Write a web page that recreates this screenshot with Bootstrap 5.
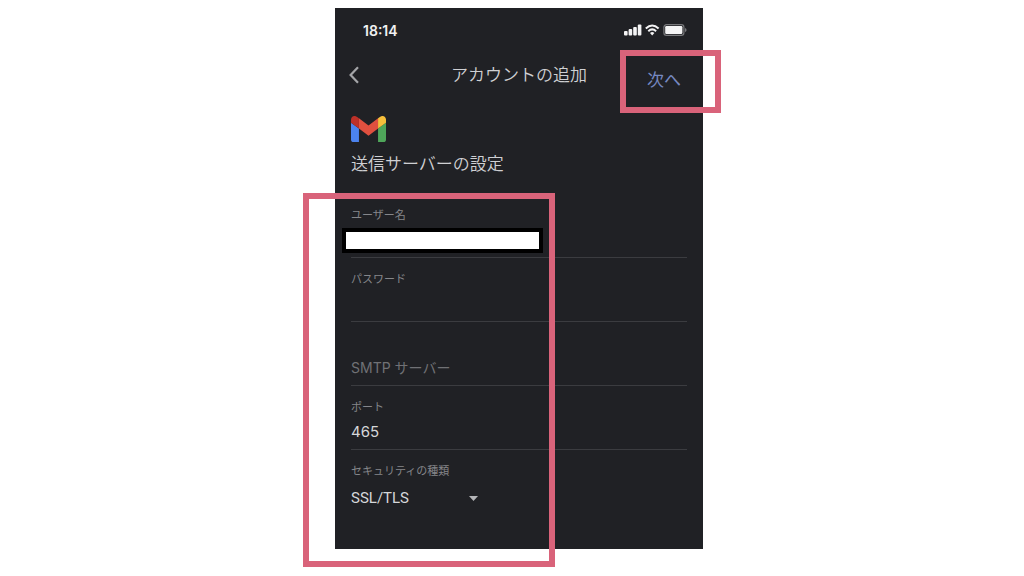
<!DOCTYPE html>
<html lang="ja">
<head>
<meta charset="utf-8">
<meta name="viewport" content="width=device-width, initial-scale=1">
<title>アカウントの追加</title>
<link href="https://cdn.jsdelivr.net/npm/bootstrap@5.3.0/dist/css/bootstrap.min.css" rel="stylesheet">
<style>
  body { font-family: Inter, "Noto Sans CJK JP", sans-serif; background: #fff; }
  .stage { padding: 8px 0 27px 14px; }
  .phone { width: 368px; max-width: 100%; background: #202125; color: #cfd0d3; padding: 0 16px 32px; }
  .status { height: 44px; padding: 0 0 0 12px; color: #f1f1f2; font-size: 14px; font-weight: 600; }
  .topbar { height: 46px; }
  .topbar h1, .section-title { font-size: 17px; line-height: 24px; font-weight: 350; }
  .side { width: 40px; }
  .plain { background: none; border: 0; padding: 0; }
  .back { margin-left: -2px; }
  .next { color: #7688c0; font-size: 17px; line-height: 24px; margin: 10px 6px 0 0; }
  .intro { padding-top: 18px; height: 96px; }
  .section-title { margin-top: 10px; }
  .field { height: 64px; border-bottom: 1px solid #3b3c40; padding-top: 13px; }
  .field label { font-size: 11px; line-height: 16px; color: #85868a; }
  .field input, .field select {
    width: 100%; height: 24px; margin-top: 5px; padding: 0; border: 0; border-radius: 0;
    background: none; color: #d6d7d9; font-size: 15px; line-height: 24px; outline: 0; appearance: none;
  }
  .field input::placeholder { color: #707175; opacity: 1; }
  .field .redacted { width: 201px; height: 25px; margin-left: -9px; background: #fff; border: 4px solid #000; }
  .field .late { margin-top: 21px; font-size: 14px; }
  .field-last { height: 67px; border-bottom: 0; }
  .field-last select { margin-top: 7px; font-family: Roboto, "Noto Sans CJK JP", sans-serif; }
  .picker { width: 128px; }
  .picker svg { right: 1px; top: 10px; pointer-events: none; }
  .callout { border: 6px solid #d9637a; pointer-events: none; }
  .callout-next { left: -27px; right: -40px; top: -18px; bottom: -21px; }
  .callout-form { left: -48px; width: 252px; top: -1px; bottom: -50px; }
</style>
</head>
<body>
<div class="stage d-flex justify-content-center">
  <main class="phone">
    <div class="status d-flex align-items-center justify-content-between">
      <span>18:14</span>
      <svg width="63" height="12" viewBox="0 0 63 12" fill="#f4f4f5" aria-hidden="true">
        <rect x="0" y="7" width="3.6" height="4.5" rx="1"/><rect x="4.6" y="5" width="3.6" height="6.5" rx="1"/><rect x="9.2" y="3" width="3.6" height="8.5" rx="1"/><rect x="13.8" y="0.5" width="3.6" height="11" rx="1"/>
        <g fill="none" stroke="#f4f4f5" stroke-width="2"><path d="M21.8 4.4Q28.2-1.4 34.6 4.4"/><path d="M24.3 7.2Q28.2 3.6 32.1 7.2"/></g>
        <path d="M26 9Q28.2 7.2 30.4 9L28.2 11.4Z"/>
        <rect x="39.9" y=".7" width="20" height="10.6" rx="2.6" fill="none" stroke="#77787b" stroke-width="1.2"/>
        <rect x="41.2" y="2" width="17.2" height="8" rx="1.2"/>
        <path d="M61 4Q62.6 4.4 62.6 6T61 8Z" fill="#77787b"/>
      </svg>
    </div>

    <header class="topbar d-flex align-items-center justify-content-between">
      <div class="side d-flex">
        <button type="button" class="plain back d-flex" aria-label="戻る">
          <svg width="10" height="18" viewBox="0 0 10 18" fill="none" stroke="#a4a5a8" stroke-width="2.2"><path d="M9 1.2 1.6 9 9 16.8"/></svg>
        </button>
      </div>
      <h1 class="mb-0">アカウントの追加</h1>
      <div class="side d-flex justify-content-end">
        <div class="position-relative next">
          <button type="button" class="plain text-nowrap text-reset d-block">次へ</button>
          <div class="callout callout-next position-absolute"></div>
        </div>
      </div>
    </header>

    <section class="intro">
      <svg class="d-block" width="35" height="26" viewBox="52 42 88 66" preserveAspectRatio="none" role="img" aria-label="Gmail">
        <path fill="#4c83ee" d="M58 108h14V74L52 59v43c0 3.32 2.69 6 6 6"/>
        <path fill="#4fa65a" d="M120 108h14c3.32 0 6-2.69 6-6V59l-20 15"/>
        <path fill="#f6bf3b" d="M120 48v26l20-15v-8c0-7.42-8.47-11.65-14.4-7.2"/>
        <path fill="#e0503f" d="M72 74V48l24 18 24-18v26L96 92"/>
        <path fill="#bd3028" d="M52 51v8l20 15V48l-5.6-4.2C60.46 39.35 52 43.58 52 51"/>
      </svg>
      <h2 class="section-title mb-0">送信サーバーの設定</h2>
    </section>

    <form class="position-relative">
      <div class="field">
        <label class="d-block" for="user">ユーザー名</label>
        <input class="redacted d-block position-relative" id="user" type="text">
      </div>
      <div class="field">
        <label class="d-block" for="pass">パスワード</label>
        <input class="d-block" id="pass" type="password">
      </div>
      <div class="field">
        <input class="late d-block" id="smtp" type="text" placeholder="SMTP サーバー" aria-label="SMTP サーバー">
      </div>
      <div class="field">
        <label class="d-block" for="port">ポート</label>
        <input class="d-block" id="port" type="text" inputmode="numeric" value="465">
      </div>
      <div class="field field-last">
        <label class="d-block" for="security">セキュリティの種類</label>
        <div class="picker position-relative">
          <select class="d-block" id="security"><option>SSL/TLS</option><option>なし</option></select>
          <svg class="position-absolute" width="9" height="5" viewBox="0 0 9 5" fill="#b4b5b8" aria-hidden="true"><path d="M0 0h9L4.5 5Z"/></svg>
        </div>
      </div>
      <div class="callout callout-form position-absolute"></div>
    </form>
  </main>
</div>
<script src="https://cdn.jsdelivr.net/npm/bootstrap@5.3.0/dist/js/bootstrap.bundle.min.js"></script>
</body>
</html>
